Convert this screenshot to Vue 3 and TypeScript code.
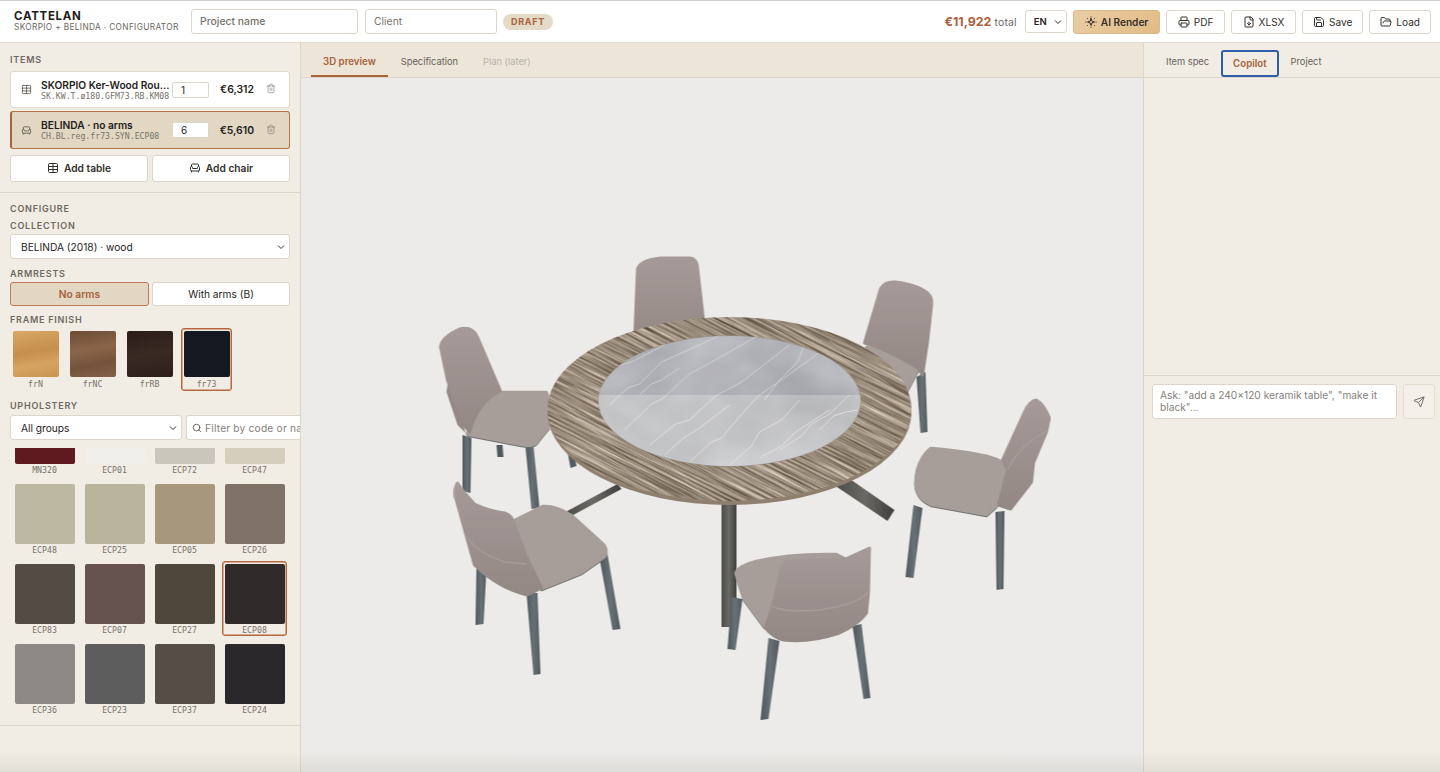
<template>
  <div class="app">
    <header class="topbar">
      <div class="brand">
        <div class="brand-name">CATTELAN</div>
        <div class="brand-sub">SKORPIO + BELINDA · CONFIGURATOR</div>
      </div>
      <input class="field project" type="text" placeholder="Project name" />
      <input class="field client" type="text" placeholder="Client" />
      <span class="pill">DRAFT</span>
      <div class="top-right">
        <div class="total"><b>€11,922</b> total</div>
        <div class="select-wrap lang">
          <select class="lang-select"><option>EN</option></select>
          <svg class="chev" viewBox="0 0 24 24"><path d="m6 9 6 6 6-6" /></svg>
        </div>
        <button class="top-btn ai">
          <svg class="ico" viewBox="0 0 24 24"><path d="M12 5l1.800 5.200L19 12l-5.200 1.800L12 19l-1.800-5.200L5 12l5.200-1.800z" /><path d="M12 1.500v.5M12 22v.5M1.500 12h.5M22 12h.5M4.500 4.500l.5.5M19 19l.5.5M19.500 4.500l-.5.5M4.500 19.500l.5-.5" /></svg>
          AI Render
        </button>
        <button v-for="a in actions" :key="a.label" class="top-btn">
          <svg class="ico" viewBox="0 0 24 24"><path v-for="d in a.paths" :key="d" :d="d" /></svg>
          {{ a.label }}
        </button>
      </div>
    </header>

    <div class="main">
      <aside class="sidebar">
        <section class="items">
          <div class="section-label">ITEMS</div>
          <div
            v-for="item in items"
            :key="item.code"
            class="item"
            :class="{ active: item.active }"
          >
            <svg class="ico item-ico" viewBox="0 0 24 24"><path v-for="d in item.icon" :key="d" :d="d" /></svg>
            <div class="item-text">
              <div class="item-name">{{ item.name }}</div>
              <div class="item-code">{{ item.code }}</div>
            </div>
            <input class="qty" type="text" :value="item.qty" />
            <div class="price">{{ item.price }}</div>
            <svg class="ico trash" viewBox="0 0 24 24"><path v-for="d in trashIcon" :key="d" :d="d" /></svg>
          </div>
          <div class="add-row">
            <button class="add-btn">
              <svg class="ico" viewBox="0 0 24 24"><path v-for="d in tableIcon" :key="d" :d="d" /></svg>
              Add table
            </button>
            <button class="add-btn">
              <svg class="ico" viewBox="0 0 24 24"><path v-for="d in chairIcon" :key="d" :d="d" /></svg>
              Add chair
            </button>
          </div>
        </section>

        <section class="configure">
          <div class="section-label">CONFIGURE</div>
          <div class="section-label sub">COLLECTION</div>
          <div class="select-wrap">
            <select class="select"><option>BELINDA (2018) · wood</option></select>
            <svg class="chev" viewBox="0 0 24 24"><path d="m6 9 6 6 6-6" /></svg>
          </div>
          <div class="section-label sub arm-label">ARMRESTS</div>
          <div class="arms">
            <button class="arm on">No arms</button>
            <button class="arm">With arms (B)</button>
          </div>
          <div class="section-label sub frame-label">FRAME FINISH</div>
          <div class="finishes">
            <div
              v-for="f in finishes"
              :key="f.code"
              class="finish"
              :class="{ selected: f.code === 'fr73' }"
            >
              <div class="finish-chip" :style="{ background: f.bg }"></div>
              <div class="chip-code">{{ f.code }}</div>
            </div>
          </div>
          <div class="section-label sub uph">UPHOLSTERY</div>
          <div class="filters">
            <div class="select-wrap groups">
              <select class="select"><option>All groups</option></select>
              <svg class="chev" viewBox="0 0 24 24"><path d="m6 9 6 6 6-6" /></svg>
            </div>
            <div class="filter-box">
              <svg class="ico" viewBox="0 0 24 24"><circle cx="11" cy="11" r="8" /><path d="m21 21-4.300-4.300" /></svg>
              <input type="text" placeholder="Filter by code or name" />
            </div>
          </div>
        </section>

        <div ref="grid" class="swatch-scroll">
          <div class="swatches">
            <div
              v-for="s in swatches"
              :key="s.code"
              class="swatch"
              :class="{ selected: s.code === 'ECP08' }"
            >
              <div class="swatch-chip" :style="{ background: s.color }"></div>
              <div class="chip-code">{{ s.code }}</div>
            </div>
          </div>
        </div>
      </aside>

      <section class="center">
        <nav class="tabs">
          <span class="tab on">3D preview</span>
          <span class="tab">Specification</span>
          <span class="tab off">Plan (later)</span>
        </nav>
        <div class="canvas">
          <svg class="scene" viewBox="301 78 843 694" preserveAspectRatio="xMidYMin slice">
            <defs>
              <filter id="grain" x="0" y="0" width="100%" height="100%" color-interpolation-filters="sRGB">
                <feTurbulence type="fractalNoise" baseFrequency="0.012 0.5" numOctaves="4" seed="7" />
                <feColorMatrix type="matrix" values="0.850 0 0 0 0.175  0.850 0 0 0 0.120  0.850 0 0 0 0.055  0 0 0 0 1" />
              </filter>
              <filter id="stone" x="0" y="0" width="100%" height="100%" color-interpolation-filters="sRGB">
                <feTurbulence type="fractalNoise" baseFrequency="0.012 0.018" numOctaves="3" seed="3" />
                <feColorMatrix type="matrix" values="0.250 0 0 0 0.590  0.250 0 0 0 0.595  0.250 0 0 0 0.610  0 0 0 0 1" />
              </filter>
              <filter id="soft" x="-5%" y="-5%" width="110%" height="110%">
                <feGaussianBlur stdDeviation="0.45" />
              </filter>
              <clipPath id="topClip"><ellipse cx="730" cy="409" rx="182" ry="92" /></clipPath>
              <clipPath id="innerClip"><ellipse cx="730" cy="401" rx="131" ry="65" /></clipPath>
              <linearGradient id="leg" x1="0" y1="0" x2="1" y2="0">
                <stop offset="0" stop-color="#4f575b" />
                <stop offset="0.5" stop-color="#687175" />
                <stop offset="1" stop-color="#525a5e" />
              </linearGradient>
              <linearGradient id="pole" x1="0" y1="0" x2="1" y2="0">
                <stop offset="0" stop-color="#4d4c4a" />
                <stop offset="0.5" stop-color="#6a6965" />
                <stop offset="1" stop-color="#3f3e3c" />
              </linearGradient>
              <linearGradient id="backFill" x1="0" y1="0" x2="0" y2="1">
                <stop offset="0" stop-color="#a59a97" />
                <stop offset="1" stop-color="#938884" />
              </linearGradient>
            </defs>

            <g filter="url(#soft)">
              <!-- behind the table -->
              <path class="leg" d="M497 445h6l1 12h-6zM568 452l6-2 3 16-6 2z" />
              <path class="chair-back" d="M635 345 638 269Q641 260 661 258L691 258Q697 259 698 267L705 330Z" />
              <path class="leg" d="M917 377l9-5 2 60-7 1z" />
              <path class="chair-seat" d="M867 347Q890 350 920 367L908 390 860 380Z" />
              <path class="chair-back" d="M865 343 881 289Q885 281 896 282 920 285 929 294 933 298 932 306L928 342 923 375 918 368Q890 350 865 343Z" />

              <path class="leg" d="M463 435l9 3-1 55-8-2z" />
              <path class="leg" d="M526 447l8-1 6 62-8 1z" />
              <path class="chair-shell" d="M447 392 450 372 466 433 458 425Z" />
              <path class="chair-seat" d="M502 392 547 392Q551 400 549 428L537 443Q534 447 522 445L470 435Q467 434 468 432 473 406 502 392Z" />
              <path class="chair-back" d="M441 347Q442 337 460 329 473 326 478 337L501 391Q478 402 470 432L463 423 448 380Z" />

              <!-- table base -->
              <path class="rod" d="M566 512l52-28 4 5-52 28z" />
              <path class="rod" d="M836 486 849 478 895 510 888 521Z" />
              <rect x="722" y="498" width="15" height="129" fill="url(#pole)" />

              <!-- table top -->
              <ellipse cx="730" cy="412" rx="182" ry="93" fill="#8f7f6e" />
              <g clip-path="url(#topClip)">
                <rect x="480" y="210" width="500" height="400" fill="#9a8c7d" filter="url(#grain)" transform="rotate(27 730 409)" />
                <path v-for="s in streaks" :key="s" :d="s" class="streak" />
              </g>
              <ellipse cx="730" cy="401" rx="131.500" ry="65.500" fill="#9c9186" />
              <g clip-path="url(#innerClip)">
                <rect x="590" y="330" width="280" height="140" filter="url(#stone)" />
                <rect x="590" y="395" width="280" height="80" fill="#d8d8d8" opacity="0.4" />
                <path v-for="v in veins" :key="v" :d="v" class="vein" />
                <rect x="590" y="330" width="280" height="65" fill="#9a9ca6" opacity="0.2" />
              </g>

              <!-- right chair -->
              <path class="leg" d="M914 505l9 3-9 70-8-1z" />
              <path class="leg" d="M996 512l9-1-1 78-7 1z" />
              <path class="chair-seat" d="M931 448Q989 453 1001 461L1007 472 997 506 987 515 932 505Q917 499 916 484 916 461 931 448Z" />
              <path class="chair-back" d="M1003 460 1024 414Q1030 400 1037 400 1045 405 1050 418L1047 432 1034 463 1032 482 1011 509 999 505 1008 470Z" />
              <path class="band" d="M1008 470Q1020 445 1047 431" />

              <!-- lower left chair -->
              <path class="leg" d="M477 565l10 4-3 55-8 1z" />
              <path class="leg" d="M527 593l11 0 3 81-7 1z" />
              <path class="leg" d="M600 558l8-4 13 75-8 1z" />
              <path class="chair-seat" d="M515 520 543 506Q556 505 572 515L605 545Q609 552 605 557L582 573 542 589 528 557Z" />
              <path class="chair-back" d="M458 483Q463 491 475 504 490 511 505 513 512 515 514 522L527 557 542 588 528 595Q500 589 475 565L466 533 456 497Q455 487 458 483Z" />
              <path class="band" d="M465 533Q475 552 505 562L527 564" />

              <!-- front chair -->
              <path class="leg" d="M732 597l11 2-7 51-8-1z" />
              <path class="leg" d="M769 638l11 3-11 78-8 1z" />
              <path class="leg" d="M853 626l9-2 9 74-7 1z" />
              <path class="chair-seat" d="M736 573Q738 566 757 561 790 553 837 554L845 558 786 562 773 603 765 627 745 600Z" />
              <path class="chair-back" d="M788 561 846 559 870 548 869 592 867 613Q859 624 840 633 810 643 784 640 773 637 766 628L774 603 782 568Q783 562 788 561Z" />
              <path class="band" d="M772 606Q785 613 820 610 860 604 869 592" />
            </g>
          </svg>
        </div>
      </section>

      <aside class="rightbar">
        <nav class="tabs right">
          <span class="tab">Item spec</span>
          <span class="tab on focus">Copilot</span>
          <span class="tab">Project</span>
        </nav>
        <div class="chat-log"></div>
        <div class="composer">
          <textarea class="ask" rows="2" placeholder="Ask: &quot;add a 240×120 keramik table&quot;, &quot;make it black&quot;..."></textarea>
          <button class="send">
            <svg class="ico" viewBox="0 0 24 24"><path v-for="d in sendIcon" :key="d" :d="d" /></svg>
          </button>
        </div>
      </aside>
    </div>
    <div class="bottom-shade"></div>
  </div>
</template>

<script setup lang="ts">
import { ref, onMounted } from 'vue'

const tableIcon = ['M5 3h14a2 2 0 0 1 2 2v14a2 2 0 0 1-2 2H5a2 2 0 0 1-2-2V5a2 2 0 0 1 2-2z', 'M12 3v18', 'M3 9h18', 'M3 15h18']
const chairIcon = [
  'M19 9V6a2 2 0 0 0-2-2H7a2 2 0 0 0-2 2v3',
  'M3 16a2 2 0 0 0 2 2h14a2 2 0 0 0 2-2v-5a2 2 0 0 0-4 0v1.500a.5.5 0 0 1-.5.5h-9a.5.5 0 0 1-.5-.5V11a2 2 0 0 0-4 0z',
  'M5 18v2',
  'M19 18v2'
]
const trashIcon = [
  'M3 6h18',
  'M19 6v14c0 1-1 2-2 2H7c-1 0-2-1-2-2V6',
  'M8 6V4c0-1 1-2 2-2h4c1 0 2 1 2 2v2',
  'M10 11v6',
  'M14 11v6'
]
const sendIcon = [
  'M14.536 21.686a.5.5 0 0 0 .937-.024l6.500-19a.496.496 0 0 0-.635-.635l-19 6.500a.5.5 0 0 0-.024.937l7.930 3.180a2 2 0 0 1 1.112 1.110z',
  'm21.854 2.147-10.940 10.939'
]

const actions = [
  {
    label: 'PDF',
    paths: [
      'M6 18H4a2 2 0 0 1-2-2v-5a2 2 0 0 1 2-2h16a2 2 0 0 1 2 2v5a2 2 0 0 1-2 2h-2',
      'M6 9V3a1 1 0 0 1 1-1h10a1 1 0 0 1 1 1v6',
      'M7 14h10a1 1 0 0 1 1 1v6a1 1 0 0 1-1 1H7a1 1 0 0 1-1-1v-6a1 1 0 0 1 1-1z'
    ]
  },
  {
    label: 'XLSX',
    paths: [
      'M15 2H6a2 2 0 0 0-2 2v16a2 2 0 0 0 2 2h12a2 2 0 0 0 2-2V7Z',
      'M14 2v4a2 2 0 0 0 2 2h4',
      'M12 18v-6',
      'm9 15 3 3 3-3'
    ]
  },
  {
    label: 'Save',
    paths: [
      'M15.200 3a2 2 0 0 1 1.400.6l3.800 3.800a2 2 0 0 1 .6 1.400V19a2 2 0 0 1-2 2H5a2 2 0 0 1-2-2V5a2 2 0 0 1 2-2z',
      'M17 21v-7a1 1 0 0 0-1-1H8a1 1 0 0 0-1 1v7',
      'M7 3v4a1 1 0 0 0 1 1h7'
    ]
  },
  {
    label: 'Load',
    paths: [
      'm6 14 1.500-2.900A2 2 0 0 1 9.240 10H20a2 2 0 0 1 1.940 2.500l-1.540 6a2 2 0 0 1-1.950 1.500H4a2 2 0 0 1-2-2V5a2 2 0 0 1 2-2h3.900a2 2 0 0 1 1.690.9l.81 1.200a2 2 0 0 0 1.670.9H18a2 2 0 0 1 2 2v2'
    ]
  }
]

const items = [
  { name: 'SKORPIO Ker-Wood Round', code: 'SK.KW.T.ø180.GFM73.RB.KM08', qty: 1, price: '€6,312', icon: tableIcon, active: false },
  { name: 'BELINDA · no arms', code: 'CH.BL.reg.fr73.SYN.ECP08', qty: 6, price: '€5,610', icon: chairIcon, active: true }
]

const finishes = [
  { code: 'frN', bg: 'linear-gradient(170deg, #d9a766 0%, #c58f4c 45%, #d6a362 70%, #c99650 100%)' },
  { code: 'frNC', bg: 'linear-gradient(170deg, #6d4b34 0%, #8a654a 40%, #75533b 70%, #85614a 100%)' },
  { code: 'frRB', bg: 'linear-gradient(170deg, #2a1c18 0%, #3a2a24 50%, #2c1e1a 100%)' },
  { code: 'fr73', bg: '#141820' }
]

const swatches = [
  { code: 'MN320', color: '#5f1a20' },
  { code: 'ECP01', color: '#f1efea' },
  { code: 'ECP72', color: '#c9c6bb' },
  { code: 'ECP47', color: '#d6cebc' },
  { code: 'ECP48', color: '#bdb8a2' },
  { code: 'ECP25', color: '#b9b49b' },
  { code: 'ECP05', color: '#a6977d' },
  { code: 'ECP26', color: '#7f7266' },
  { code: 'ECP83', color: '#544b45' },
  { code: 'ECP07', color: '#66524e' },
  { code: 'ECP27', color: '#50473c' },
  { code: 'ECP08', color: '#302a2a' },
  { code: 'ECP36', color: '#8d8a85' },
  { code: 'ECP23', color: '#5e5d5e' },
  { code: 'ECP37', color: '#574d47' },
  { code: 'ECP24', color: '#2a282b' }
]

// pale lines over the wood grain of the table top
const streaks = [
  'M560 400 640 470',
  'M575 385 700 490',
  'M620 345 690 375',
  'M830 340 910 400',
  'M845 350 905 385',
  'M640 490 700 505',
  'M770 470 820 500'
]

const veins = [
  'M610 405 628 388 640 384 662 362 700 345',
  'M625 430 652 404 664 398 690 374 712 362 760 335',
  'M650 445 676 424 690 420 716 396 742 382 790 345',
  'M690 462 712 442 722 438 744 412 760 395 782 380 830 345',
  'M730 465 752 446 760 432 782 420 800 400',
  'M600 380 618 366 632 362 665 345',
  'M780 450 802 436 812 424 830 414 850 395',
  'M760 458 782 446 796 432 830 410',
  'M640 395 652 384 662 380 680 368',
  'M820 430 834 416 846 412 858 410',
  'M665 455 684 438 700 428 730 405',
  'M700 345 720 335 745 332',
  'M805 345 798 362 780 380 765 400'
]

const grid = ref<HTMLElement | null>(null)

onMounted(() => {
  // the list opens part-way down, with the first row cut by the filter bar
  if (grid.value) grid.value.scrollTop = 47
})
</script>

<style>
html,
body {
  margin: 0;
  background: #f1ede5;
}
</style>

<style scoped>
.app {
  position: relative;
  height: 772px;
  overflow: hidden;
  display: flex;
  flex-direction: column;
  font-family: Inter, "Noto Sans", sans-serif;
  color: #1f1d1a;
}

.topbar {
  height: 43px;
  box-sizing: border-box;
  flex: none;
  display: flex;
  align-items: center;
  background: #fff;
  border-top: 1px solid #d0d0d0;
  border-bottom: 1px solid #e1dbcd;
  padding: 0 9px 0 14px;
}

.brand {
  width: 177px;
  flex: none;
}

.brand-name {
  font-size: 11.5px;
  line-height: 11px;
  font-weight: 700;
  letter-spacing: 0.7px;
}

.brand-sub {
  font-size: 8.3px;
  line-height: 10px;
  letter-spacing: 0.34px;
  color: #6c675f;
}

.field {
  box-sizing: border-box;
  height: 25px;
  margin-top: -1px;
  border: 1px solid #ddd6c8;
  border-radius: 3px;
  padding: 0 8px;
  font-family: inherit;
  font-size: 10.4px;
  background: #fff;
  outline: none;
}

.field::placeholder {
  color: #77726a;
}

.project {
  width: 167px;
  margin-right: 7px;
  font-weight: 500;
}

.client {
  width: 132px;
  margin-right: 6px;
}

.pill {
  width: 50px;
  height: 16px;
  border-radius: 8px;
  background: #e3dbc8;
  color: #a8623c;
  font-size: 9px;
  line-height: 16px;
  font-weight: 700;
  letter-spacing: 0.7px;
  text-align: center;
}

.top-right {
  margin-left: auto;
  display: flex;
  align-items: center;
  gap: 6px;
}

.total {
  font-size: 10.4px;
  color: #6c675f;
  margin-right: 2px;
  letter-spacing: 0.2px;
}

.total b {
  font-size: 12.4px;
  color: #a8623c;
  font-weight: 700;
  letter-spacing: 0;
}

.select-wrap {
  position: relative;
}

.chev {
  position: absolute;
  right: 3px;
  top: 50%;
  width: 12px;
  height: 12px;
  margin-top: -6px;
  fill: none;
  stroke: #33302b;
  stroke-width: 2;
  pointer-events: none;
}

.lang-select {
  appearance: none;
  display: block;
  width: 42px;
  height: 23px;
  border: 1px solid #ddd6c8;
  border-radius: 3px;
  background: #fff;
  font-family: inherit;
  font-size: 9.5px;
  font-weight: 600;
  padding: 0 0 0 8px;
  color: #1f1d1a;
}

.ico {
  width: 12px;
  height: 12px;
  flex: none;
  fill: none;
  stroke: currentColor;
  stroke-width: 2;
  stroke-linecap: round;
  stroke-linejoin: round;
}

.top-btn {
  box-sizing: border-box;
  height: 24px;
  padding: 0 10px;
  display: flex;
  align-items: center;
  gap: 4px;
  border: 1px solid #ddd6c8;
  border-radius: 3px;
  background: #fff;
  color: #33302b;
  font-family: inherit;
  font-size: 10.1px;
  font-weight: 400;
}

.top-btn:nth-of-type(2),
.top-btn:nth-of-type(3) {
  padding: 0 10.5px;
}

.top-btn.ai {
  background: linear-gradient(135deg, #e9cda4, #e2bb86);
  border-color: #dcb98a;
  font-weight: 600;
  padding: 0 11px;
}

.main {
  flex: 1;
  min-height: 0;
  display: flex;
}

.sidebar {
  width: 301px;
  flex: none;
  box-sizing: border-box;
  display: flex;
  flex-direction: column;
  background: #f1ede5;
  border-right: 1px solid #dcd6c8;
}

.items {
  padding: 11px 10px 10px;
  border-bottom: 1px solid #dcd6c8;
}

.section-label {
  font-size: 9px;
  line-height: 11px;
  font-weight: 600;
  letter-spacing: 0.75px;
  color: #6e6961;
}

.items .section-label {
  margin-bottom: 6px;
}

.item {
  box-sizing: border-box;
  height: 37px;
  display: flex;
  align-items: center;
  background: #fff;
  border: 1px solid #e0d9ca;
  border-radius: 3px;
  padding: 0 13px 0 10px;
  margin-bottom: 3px;
}

.item.active {
  height: 38px;
  background: #e1d7c2;
  border: 1px solid #b5714a;
  border-left: 2px solid #a8623c;
  padding-left: 9px;
  margin-bottom: 6px;
}

.item-ico {
  width: 11px;
  height: 11px;
  color: #55514a;
  stroke-width: 1.700;
  margin-right: 9px;
}

.item-text {
  width: 131px;
  flex: none;
  overflow: hidden;
  white-space: nowrap;
}

.item-name {
  font-size: 10.2px;
  line-height: 12px;
  font-weight: 600;
  overflow: hidden;
  text-overflow: ellipsis;
}

.item-code {
  font-family: "DejaVu Sans Mono", monospace;
  font-size: 8.2px;
  line-height: 10px;
  color: #77726a;
}

.qty {
  box-sizing: border-box;
  width: 37px;
  height: 16px;
  flex: none;
  border: 1px solid #ddd6c8;
  border-radius: 2px;
  padding: 0 8px;
  font-family: inherit;
  font-size: 10px;
  background: #fff;
  color: #1f1d1a;
}

.price {
  width: 45px;
  flex: none;
  font-size: 10.4px;
  font-weight: 600;
  text-align: right;
}

.trash {
  margin-left: 12px;
  margin-top: -2px;
  width: 10px;
  height: 11px;
  color: #85807a;
  stroke-width: 1.600;
}

.add-row {
  display: grid;
  grid-template-columns: 1fr 1fr;
  gap: 4px;
}

.add-btn {
  box-sizing: border-box;
  height: 27px;
  display: flex;
  align-items: center;
  justify-content: center;
  gap: 5px;
  padding: 0 0 1px;
  background: #fff;
  border: 1px solid #ddd6c8;
  border-radius: 3px;
  font-family: inherit;
  font-size: 10.2px;
  font-weight: 600;
  color: #33302b;
}

.configure {
  padding: 10px 10px 0;
}

.section-label.sub {
  margin-top: 6px;
  margin-bottom: 3px;
}

.section-label.arm-label {
  margin-top: 9px;
  margin-bottom: 3px;
}

.section-label.frame-label {
  margin-top: 8px;
  margin-bottom: 3px;
}

.section-label.uph {
  margin-top: 9px;
  margin-bottom: 4px;
}

.select {
  appearance: none;
  display: block;
  box-sizing: border-box;
  width: 100%;
  height: 25px;
  border: 1px solid #ddd6c8;
  border-radius: 3px;
  background: #fff;
  padding: 0 10px;
  font-family: inherit;
  font-size: 10.2px;
  color: #1f1d1a;
}

.arms {
  display: grid;
  grid-template-columns: 139px 1fr;
  gap: 3px;
}

.arm {
  box-sizing: border-box;
  height: 24px;
  border: 1px solid #ddd6c8;
  border-radius: 3px;
  background: #fff;
  font-family: inherit;
  font-size: 10.2px;
  color: #1f1d1a;
}

.arm.on {
  background: #e1d7c2;
  border-color: #bc7c57;
  color: #a8623c;
  font-weight: 600;
}

.finishes {
  display: flex;
  gap: 6px;
}

.finish {
  box-sizing: border-box;
  width: 51px;
  height: 63px;
  padding: 2px 1.5px;
  border: 1px solid transparent;
  border-radius: 3px;
}

.finish.selected {
  border: 1px solid #b5683f;
  box-shadow: inset 0 0 0 0.5px #b5683f;
}

.finish-chip {
  width: 46px;
  height: 46px;
  border-radius: 2px;
}

.chip-code {
  font-family: "DejaVu Sans Mono", monospace;
  font-size: 8.2px;
  line-height: 10px;
  margin-top: 2px;
  text-align: center;
  color: #77726a;
}

.filters {
  display: flex;
  gap: 4px;
  margin-right: -10px;
}

.groups {
  width: 172px;
  flex: none;
}

.filter-box {
  flex: 1;
  min-width: 0;
  box-sizing: border-box;
  height: 25px;
  display: flex;
  align-items: center;
  gap: 3px;
  padding-left: 5px;
  background: #fff;
  border: 1px solid #ddd6c8;
  border-right: none;
  border-radius: 3px 0 0 3px;
  overflow: hidden;
  color: #55514a;
}

.filter-box .ico {
  width: 10px;
  height: 10px;
}

.filter-box input {
  width: 130px;
  flex: none;
  border: none;
  outline: none;
  padding: 0;
  font-family: inherit;
  font-size: 10.2px;
  letter-spacing: 0.2px;
}

.filter-box input::placeholder {
  color: #85807a;
}

.swatch-scroll {
  margin-top: 8px;
  height: 277px;
  flex: none;
  overflow-y: scroll;
  scrollbar-width: none;
  border-bottom: 1px solid #dcd6c8;
}

.swatches {
  display: grid;
  grid-template-columns: repeat(4, 65px);
  gap: 5px;
  padding: 0 0 16px 12px;
}

.swatch {
  box-sizing: border-box;
  height: 75px;
  padding: 2px 1.5px;
  border: 1px solid transparent;
  border-radius: 3px;
}

.swatch.selected {
  border: 1px solid #b5683f;
  box-shadow: inset 0 0 0 0.5px #b5683f;
}

.swatch-chip {
  width: 60px;
  height: 60px;
  border-radius: 2px;
}

.swatch .chip-code {
  margin-top: 1px;
  width: 60px;
}

.center {
  flex: 1;
  min-width: 0;
  display: flex;
  flex-direction: column;
}

.tabs {
  height: 35px;
  box-sizing: border-box;
  flex: none;
  display: flex;
  align-items: flex-end;
  background: #ece5d8;
  border-bottom: 1px solid #dcd6c8;
  padding: 0 10px;
  gap: 1px;
}

.tab {
  box-sizing: border-box;
  height: 34px;
  line-height: 38px;
  padding: 0 12px;
  font-size: 9.3px;
  color: #66615a;
}

.tab.on {
  color: #a8623c;
  font-size: 9.7px;
  font-weight: 600;
  border-bottom: 2px solid #a8623c;
}

.tab.off {
  color: #b9b3a6;
}

.canvas {
  flex: 1;
  min-height: 0;
  background: #ecebe9;
}

.scene {
  display: block;
  width: 100%;
  height: 100%;
}

.leg {
  fill: url(#leg);
}

.rod {
  fill: url(#pole);
}

.chair-back {
  fill: url(#backFill);
  stroke: url(#backFill);
  stroke-width: 3;
  stroke-linejoin: round;
}

.chair-shell {
  fill: #938884;
}

.chair-seat {
  fill: #a79d99;
  stroke: #a79d99;
  stroke-width: 2.500;
  stroke-linejoin: round;
  filter: drop-shadow(0 1.5px 0 #6d7072);
}

.band {
  fill: none;
  stroke: #a69b97;
  stroke-width: 1.600;
}

.streak {
  fill: none;
  stroke: #d8d2c6;
  stroke-width: 0.8;
  opacity: 0.45;
}

.vein {
  fill: none;
  stroke: #eeeae6;
  stroke-width: 0.8;
  stroke-linejoin: round;
  opacity: 0.85;
}

.rightbar {
  width: 297px;
  flex: none;
  box-sizing: border-box;
  display: flex;
  flex-direction: column;
  background: #f1ede5;
  border-left: 1px solid #dcd6c8;
}

.tabs.right {
  background: #f1ede5;
  padding: 0 10px;
  gap: 0;
}

.tabs.right .tab {
  padding: 0 12px;
}

.tabs.right .tab.focus {
  height: 27px;
  line-height: 23px;
  padding: 0 10px;
  border: 2px solid #2f5ea8;
  border-radius: 3px;
}

.chat-log {
  height: 297px;
  flex: none;
  border-bottom: 1px solid #dcd6c8;
}

.composer {
  display: flex;
  gap: 6px;
  padding: 8px 5px 0 8px;
}

.ask {
  box-sizing: border-box;
  width: 245px;
  height: 35px;
  flex: none;
  resize: none;
  overflow: hidden;
  border: 1px solid #ddd6c8;
  border-radius: 3px;
  padding: 4px 7px;
  font-family: inherit;
  font-size: 10.2px;
  line-height: 12px;
  background: #fff;
  outline: none;
}

.ask::placeholder {
  color: #85807a;
}

.send {
  box-sizing: border-box;
  width: 32px;
  height: 35px;
  flex: none;
  display: flex;
  align-items: center;
  justify-content: center;
  border: 1px solid #e4decf;
  border-radius: 3px;
  background: #f4f0e9;
  color: #77726a;
  padding: 0;
}

.bottom-shade {
  position: absolute;
  left: 0;
  right: 0;
  bottom: 0;
  height: 22px;
  background: linear-gradient(to bottom, rgba(90, 80, 60, 0), rgba(90, 80, 60, 0.09));
  pointer-events: none;
}
</style>
